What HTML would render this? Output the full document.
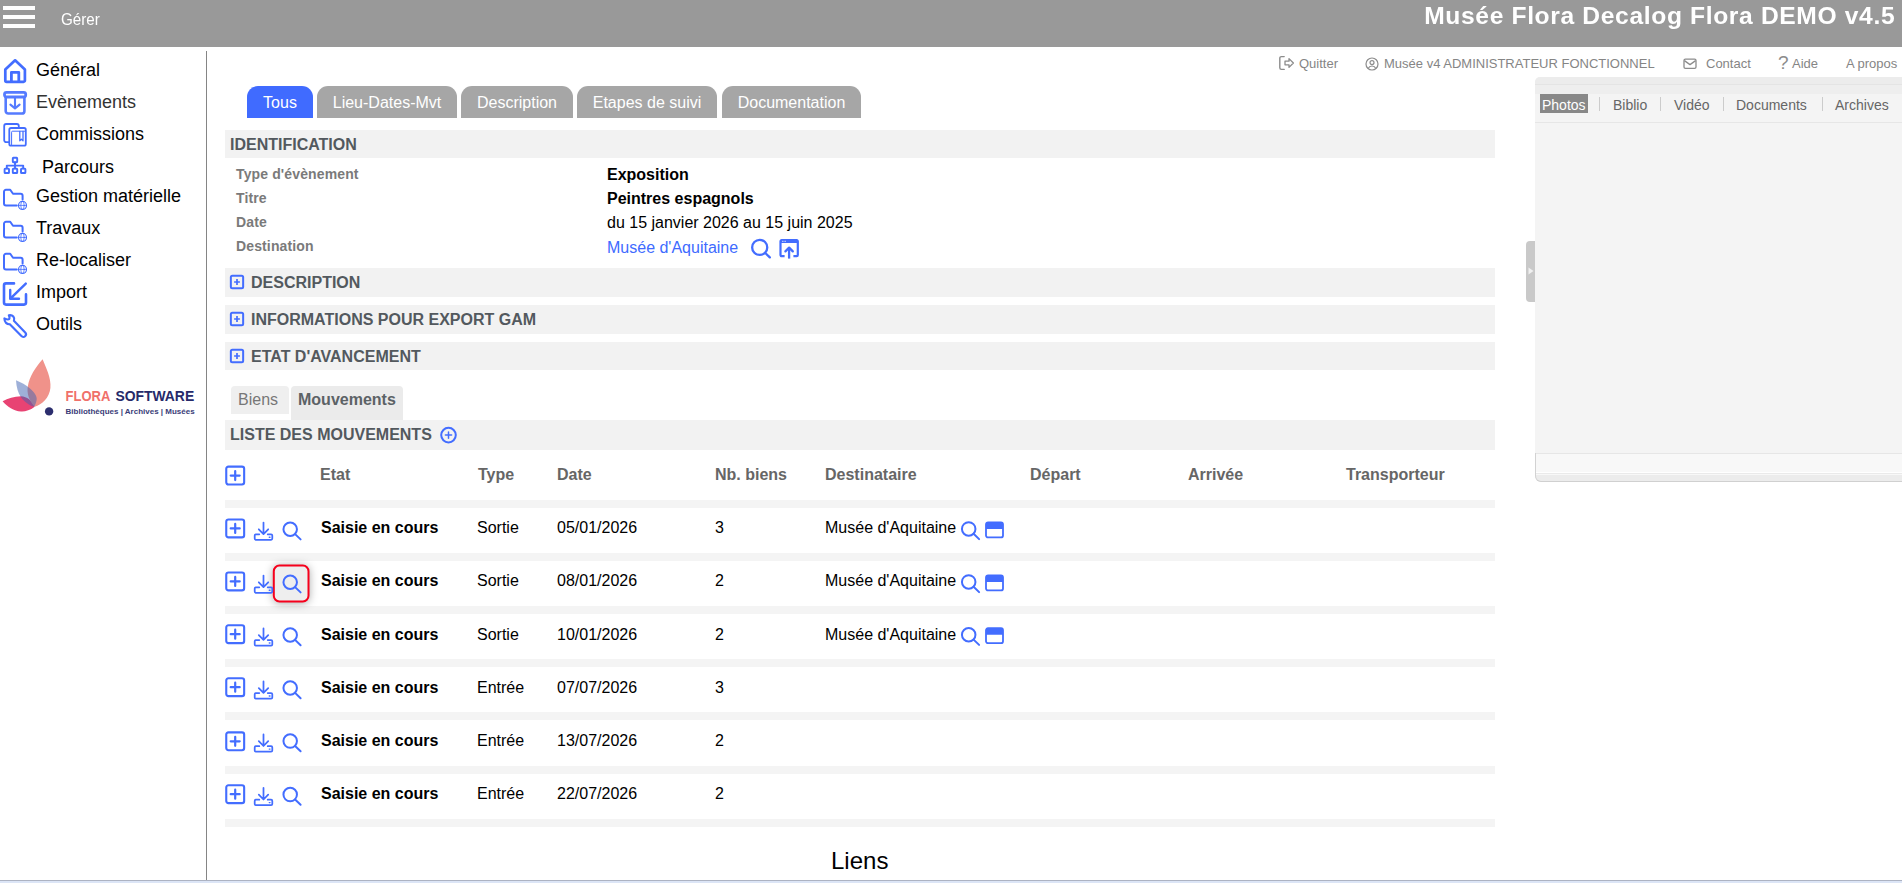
<!DOCTYPE html>
<html lang="fr">
<head>
<meta charset="utf-8">
<title>Musée Flora</title>
<style>
*{box-sizing:border-box;margin:0;padding:0}
html,body{width:1902px;height:883px;overflow:hidden;background:#fff}
body{font-family:"Liberation Sans",sans-serif;color:#000;position:relative}
.abs{position:absolute;white-space:nowrap}
svg{display:block;overflow:visible}
.ic{fill:none;stroke:#436dff;stroke-width:2;stroke-linecap:round;stroke-linejoin:round}
#hdr{left:0;top:0;width:1902px;height:47px;background:#999}
.bar3{left:3px;width:32px;height:4px;background:#fff}
.side{left:36px;font-size:18px;line-height:22px;color:#000}
.sico{left:2px;width:26px;height:26px}
.tab{top:86px;height:32px;border-radius:11px 11px 0 0;background:#a6a6a6;color:#fff;font-size:16px;line-height:34px;text-align:center}
.sec{left:225px;width:1270px;background:#f2f2f2;color:#53595e;font-weight:bold;font-size:16px}
.lbl{left:236px;letter-spacing:.13px;font-size:14px;font-weight:bold;color:#7a7a7a;line-height:16px}
.val{left:607px;font-size:16px;line-height:18px}
.th{top:466px;font-size:16px;font-weight:bold;color:#666;line-height:18px}
.sep{left:225px;width:1270px;height:8px;background:#f4f4f4}
.td{font-size:16px;line-height:18px;color:#000}
.top{top:56px;font-size:13px;line-height:15px;color:#858585}
.rt{top:97px;font-size:14px;line-height:16px;color:#666}
.rs{top:97px;width:1px;height:14px;background:#ccc}
</style>
</head>
<body>
<!-- HEADER -->
<div class="abs" id="hdr"></div>
<div class="abs bar3" style="top:6px"></div>
<div class="abs bar3" style="top:15px"></div>
<div class="abs bar3" style="top:24px"></div>
<div class="abs" id="gerer" style="left:61px;top:10px;font-size:16px;line-height:20px;color:#fff;transform:scaleX(.95);transform-origin:0 50%">Gérer</div>
<div class="abs" id="title" style="right:7px;top:2px;font-size:23px;line-height:28px;font-weight:bold;color:#fff;letter-spacing:.6px;transform:scaleX(1.07);transform-origin:100% 50%">Musée Flora Decalog Flora DEMO v4.5</div>

<!-- SIDEBAR -->
<div class="abs" style="left:206px;top:51px;width:1px;height:829px;background:#858585"></div>
<div class="abs side" style="left:36px;top:59px">Général</div>
<div class="abs side" style="left:36px;top:91px;color:#333">Evènements</div>
<div class="abs side" style="left:36px;top:123px">Commissions</div>
<div class="abs side" style="left:42px;top:156px">Parcours</div>
<div class="abs side" style="left:36px;top:185px">Gestion matérielle</div>
<div class="abs side" style="left:36px;top:217px">Travaux</div>
<div class="abs side" style="left:36px;top:249px">Re-localiser</div>
<div class="abs side" style="left:36px;top:281px">Import</div>
<div class="abs side" style="left:36px;top:313px">Outils</div>
<svg class="abs ic" style="left:0;top:50px" width="32" height="300" viewBox="0 50 32 300" stroke-width="2.5">
<!-- home -->
<path d="M5.3 69.6L15.1 60.3L24.9 69.6V80.5a1.3 1.3 0 0 1-1.3 1.3H6.6a1.3 1.3 0 0 1-1.3-1.3Z" stroke-width="2.7"/>
<path d="M11.4 81.6V72.3h7.4v9.3" stroke-width="2.8"/>
<!-- evenements -->
<g stroke="#557bff">
<rect x="4.5" y="92.3" width="21.2" height="4.7" rx="2" stroke-width="2.8"/>
<path d="M5.7 97.6V110.9a2.6 2.6 0 0 0 2.6 2.6H21.8a2.6 2.6 0 0 0 2.6-2.6V97.6" stroke-width="2.6"/>
<path d="M15 97.4V108M10.4 104.6l4.6 3.8l4.6-3.8" stroke-width="2.1"/>
</g>
<!-- commissions -->
<path d="M8.4 142.2H6.2a2 2 0 0 1-2-2V126a2 2 0 0 1 2-2h10.6a2 2 0 0 1 2 2v1.2" stroke-width="1.8"/>
<rect x="9.3" y="128" width="16.5" height="17.7" rx="1.8" stroke-width="1.8"/>
<path d="M11.6 144.6V132.2a1 1 0 0 1 1-1H24.6" stroke-width="1"/>
<path d="M19.8 131.4V140.8l1.6-1.5l1.6 1.5V131.4" stroke-width="1.3"/>
<!-- parcours -->
<g stroke-width="1.9">
<rect x="12.8" y="157.8" width="4.4" height="4.4" rx=".6"/>
<rect x="4.6" y="168.6" width="4.4" height="4.4" rx=".6"/>
<rect x="12.8" y="168.6" width="4.4" height="4.4" rx=".6"/>
<rect x="21" y="168.6" width="4.4" height="4.4" rx=".6"/>
<path d="M15 162.4V168.4M6.8 168.4V165.6H23.2V168.4"/>
</g>
<!-- folders -->
<g stroke-width="2" transform="translate(0,-0.8)">
<path d="M16.8 206.4H6a2 2 0 0 1-2-2V192.6a2 2 0 0 1 2-2h4.2l2.8 4H20.6a2 2 0 0 1 2 2v3.7"/>
<g stroke-width=".8"><circle stroke-width="1.15" cx="22.5" cy="206.2" r="4"/><ellipse cx="22.5" cy="206.2" rx="1.7" ry="4"/><path d="M18.5 206.2h8"/></g>
<path d="M16.8 238.4H6a2 2 0 0 1-2-2V224.6a2 2 0 0 1 2-2h4.2l2.8 4H20.6a2 2 0 0 1 2 2v3.7"/>
<g stroke-width=".8"><circle stroke-width="1.15" cx="22.5" cy="238.2" r="4"/><ellipse cx="22.5" cy="238.2" rx="1.7" ry="4"/><path d="M18.5 238.2h8"/></g>
<path d="M16.8 270.4H6a2 2 0 0 1-2-2V256.6a2 2 0 0 1 2-2h4.2l2.8 4H20.6a2 2 0 0 1 2 2v3.7"/>
<g stroke-width=".8"><circle stroke-width="1.15" cx="22.5" cy="270.2" r="4"/><ellipse cx="22.5" cy="270.2" rx="1.7" ry="4"/><path d="M18.5 270.2h8"/></g>
</g>
<!-- import -->
<path d="M14 283.4H6a2 2 0 0 0-2 2V302.6a2 2 0 0 0 2 2H24a2 2 0 0 0 2-2V294.4" stroke-width="2.6"/>
<path d="M25.8 283.6L10.6 298.4M10.2 290V298.8H19" stroke-width="2.4"/>
<!-- outils -->
<path d="M8.8 315.2Q11.4 321.6 4.4 318.4C4.4 322.2 7 324.6 9.8 324.2L21.4 336.1A2.6 2.6 0 0 0 25.2 332.5L13.9 320.8C15.2 317.4 12.8 314.4 8.8 315.2Z" stroke-width="2.15"/>
</svg>


<svg class="abs" style="left:0;top:350px" width="200" height="75" viewBox="0 350 200 75">
<path d="M2.6 401.2C8 398.6 14 396.6 21 396.3C27 396.6 32 400.6 34.7 406.8C30 410.4 25 411.8 21 411.5C14 411.2 7 406.6 2.6 401.2Z" fill="#e84373"/>
<path d="M42.6 359.3C46 368 51.4 378 50.4 388C49.4 398 42 404.6 34.7 406.8C28.6 400 26.6 393 27.9 386C29.4 377 35.6 367 42.6 359.3Z" fill="#f0928a"/>
<path d="M16 380.3C21 382.4 26 385 30 388.4C34.6 392.4 37.4 396.6 36.6 400C36 403 35 405.4 34.2 406.8C29.6 405.6 24.4 402 21 397.3C18 393.2 16.4 387 16 380.3Z" fill="#3d61b1" fill-opacity=".5"/>
<circle cx="49.1" cy="411.4" r="4.2" fill="#2c2e6e"/>
<text x="65.6" y="400.7" font-family="Liberation Sans, sans-serif" font-weight="bold" font-size="14.4" fill="#f0706a" textLength="44.8" lengthAdjust="spacingAndGlyphs">FLORA</text>
<text x="115.4" y="400.7" font-family="Liberation Sans, sans-serif" font-weight="bold" font-size="14.4" fill="#262a6a" textLength="78.8" lengthAdjust="spacingAndGlyphs">SOFTWARE</text>
<text x="65.6" y="414.2" font-family="Liberation Sans, sans-serif" font-weight="bold" font-size="7" fill="#3a3c78" textLength="129" lengthAdjust="spacingAndGlyphs">Bibliothèques | Archives | Musées</text>
</svg>
<!-- TOP LINKS -->
<svg class="abs" style="left:1278px;top:55px" width="17" height="16" viewBox="-1 0 17 16" fill="none" stroke="#8c8c8c" stroke-width="1.4" stroke-linecap="round" stroke-linejoin="round"><path d="M5.2 1.6H2.4A1.6 1.6 0 0 0 .8 3.2v9.6a1.6 1.6 0 0 0 1.6 1.6h2.8"/><path d="M6 6.2h4V3.6l4.4 4.4L10 12.4V9.8H6z" stroke-width="1.3"/></svg>
<div class="abs top" style="left:1299px">Quitter</div>
<svg class="abs" style="left:1365px;top:57px" width="14" height="14" viewBox="0 0 14 14" fill="none" stroke="#8c8c8c" stroke-width="1.2"><circle cx="7" cy="7" r="6"/><circle cx="7" cy="5.6" r="2"/><path d="M3.2 11.4c.8-1.8 2.2-2.4 3.8-2.4s3 .6 3.8 2.4"/></svg>
<div class="abs top" style="left:1384px">Musée v4 ADMINISTRATEUR FONCTIONNEL</div>
<svg class="abs" style="left:1683px;top:58px" width="14" height="12" viewBox="0 0 14 12" fill="none" stroke="#8c8c8c" stroke-width="1.3" stroke-linejoin="round"><rect x="1" y="1.2" width="12" height="9.2" rx="1.4"/><path d="M1.4 2.6L7 6.6l5.6-4"/></svg>
<div class="abs top" style="left:1706px">Contact</div>
<div class="abs top" style="left:1778px;top:52px;font-size:19px;line-height:22px;color:#8c8c8c">?</div>
<div class="abs top" style="left:1792px">Aide</div>
<div class="abs top" style="left:1846px">A propos</div>


<!-- TABS -->
<div class="abs tab" style="left:247px;width:66px;background:#406bff">Tous</div>
<div class="abs tab" style="left:317px;width:140px">Lieu-Dates-Mvt</div>
<div class="abs tab" style="left:461px;width:112px">Description</div>
<div class="abs tab" style="left:577px;width:140px">Etapes de suivi</div>
<div class="abs tab" style="left:722px;width:139px">Documentation</div>


<!-- MAIN -->
<div class="abs sec" style="top:130px;height:28px;line-height:30px;padding-left:5px">IDENTIFICATION</div>
<div class="abs lbl" style="top:166px">Type d'évènement</div>
<div class="abs lbl" style="top:190px">Titre</div>
<div class="abs lbl" style="top:214px">Date</div>
<div class="abs lbl" style="top:238px">Destination</div>
<div class="abs val" style="top:166px;font-weight:bold">Exposition</div>
<div class="abs val" style="top:190px;font-weight:bold">Peintres espagnols</div>
<div class="abs val" style="top:214px">du 15 janvier 2026 au 15 juin 2025</div>
<div class="abs val" style="top:239px;color:#406bff">Musée d'Aquitaine</div>
<svg class="abs ic" style="left:740px;top:230px" width="70" height="40" viewBox="740 230 70 40">
<g stroke-width="2.3"><circle cx="759.7" cy="247.4" r="7.55"/><path d="M765.3 253l4.5 4.4"/></g>
<g stroke-width="2.2" stroke-linecap="butt" stroke-linejoin="round">
<path d="M784.6 256.2H781.6a1.1 1.1 0 0 1-1.1-1.1V241.2a1.1 1.1 0 0 1 1.1-1.1H796.7a1.1 1.1 0 0 1 1.1 1.1V255.1a1.1 1.1 0 0 1-1.1 1.1H793.4"/>
<path d="M780.5 240.1H797.8V243H780.5z" fill="#436dff" stroke="none"/>
<path d="M789.1 258.6V248" stroke-width="2.3"/><path d="M785.4 251.4l3.7-3.8l3.7 3.8" stroke-width="2.3" stroke-linecap="round"/>
<path d="M782.2 241.3h3.6" stroke="#fff" stroke-width=".9" stroke-dasharray=".9 .5"/>
</g></svg>
<div class="abs sec" style="top:268px;height:29px;line-height:29px;padding-left:26px">DESCRIPTION</div>
<svg class="abs ic" style="left:230px;top:275px" width="14" height="14" viewBox="0 0 14 14" stroke-width="1.35"><rect x=".85" y=".85" width="12.3" height="12.3" rx="1.5"/><path d="M7 4.1v5.8M4.1 7h5.8" stroke-width="1.7" stroke-linecap="butt"/></svg>
<div class="abs sec" style="top:305px;height:29px;line-height:29px;padding-left:26px">INFORMATIONS POUR EXPORT GAM</div>
<svg class="abs ic" style="left:230px;top:312px" width="14" height="14" viewBox="0 0 14 14" stroke-width="1.35"><rect x=".85" y=".85" width="12.3" height="12.3" rx="1.5"/><path d="M7 4.1v5.8M4.1 7h5.8" stroke-width="1.7" stroke-linecap="butt"/></svg>
<div class="abs sec" style="top:342px;height:28px;line-height:29px;padding-left:26px">ETAT D'AVANCEMENT</div>
<svg class="abs ic" style="left:230px;top:349px" width="14" height="14" viewBox="0 0 14 14" stroke-width="1.35"><rect x=".85" y=".85" width="12.3" height="12.3" rx="1.5"/><path d="M7 4.1v5.8M4.1 7h5.8" stroke-width="1.7" stroke-linecap="butt"/></svg>
<div class="abs" style="left:231px;top:386px;width:58px;height:28px;background:#efefef;border-radius:4px 4px 0 0;color:#777;font-size:16px;line-height:27px;padding-left:7px">Biens</div>
<div class="abs" style="left:291px;top:386px;width:112px;height:34px;background:#ebebeb;border-radius:4px 4px 0 0;color:#5c6266;font-weight:bold;font-size:16px;line-height:27px;padding-left:7px">Mouvements</div>
<div class="abs sec" style="top:420px;height:30px;line-height:29px;padding-left:5px">LISTE DES MOUVEMENTS</div>
<svg class="abs ic" style="left:440px;top:426px" width="18" height="18" viewBox="0 0 18 18" stroke-width="1.3"><circle cx="8.5" cy="9.1" r="7.3"/><path d="M8.5 6v6.2M5.4 9.1h6.2" stroke-width="1.5"/></svg>


<!-- TABLE -->
<div class="abs th" style="left:320px">Etat</div>
<div class="abs th" style="left:478px">Type</div>
<div class="abs th" style="left:557px">Date</div>
<div class="abs th" style="left:715px">Nb. biens</div>
<div class="abs th" style="left:825px">Destinataire</div>
<div class="abs th" style="left:1030px">Départ</div>
<div class="abs th" style="left:1188px">Arrivée</div>
<div class="abs th" style="left:1346px">Transporteur</div>
<div class="abs sep" style="top:500px"></div>
<div class="abs sep" style="top:553px"></div>
<div class="abs sep" style="top:606px"></div>
<div class="abs sep" style="top:659px"></div>
<div class="abs sep" style="top:712px"></div>
<div class="abs sep" style="top:766px"></div>
<div class="abs sep" style="top:819px"></div>
<svg class="abs" style="left:262px;top:554px;filter:drop-shadow(0 1px 4px rgba(0,0,0,.33))" width="60" height="60" viewBox="262 554 60 60"><rect x="273.8" y="565.6" width="34.7" height="35.8" rx="5.6" fill="#eeeeee" stroke="#f6001c" stroke-width="2"/></svg>
<div class="abs td" style="left:321px;top:519px;font-weight:bold">Saisie en cours</div><div class="abs td" style="left:477px;top:519px">Sortie</div><div class="abs td" style="left:557px;top:519px">05/01/2026</div><div class="abs td" style="left:715px;top:519px">3</div><div class="abs td" style="left:825px;top:519px">Musée d'Aquitaine</div>
<div class="abs td" style="left:321px;top:572px;font-weight:bold">Saisie en cours</div><div class="abs td" style="left:477px;top:572px">Sortie</div><div class="abs td" style="left:557px;top:572px">08/01/2026</div><div class="abs td" style="left:715px;top:572px">2</div><div class="abs td" style="left:825px;top:572px">Musée d'Aquitaine</div>
<div class="abs td" style="left:321px;top:626px;font-weight:bold">Saisie en cours</div><div class="abs td" style="left:477px;top:626px">Sortie</div><div class="abs td" style="left:557px;top:626px">10/01/2026</div><div class="abs td" style="left:715px;top:626px">2</div><div class="abs td" style="left:825px;top:626px">Musée d'Aquitaine</div>
<div class="abs td" style="left:321px;top:679px;font-weight:bold">Saisie en cours</div><div class="abs td" style="left:477px;top:679px">Entrée</div><div class="abs td" style="left:557px;top:679px">07/07/2026</div><div class="abs td" style="left:715px;top:679px">3</div>
<div class="abs td" style="left:321px;top:732px;font-weight:bold">Saisie en cours</div><div class="abs td" style="left:477px;top:732px">Entrée</div><div class="abs td" style="left:557px;top:732px">13/07/2026</div><div class="abs td" style="left:715px;top:732px">2</div>
<div class="abs td" style="left:321px;top:785px;font-weight:bold">Saisie en cours</div><div class="abs td" style="left:477px;top:785px">Entrée</div><div class="abs td" style="left:557px;top:785px">22/07/2026</div><div class="abs td" style="left:715px;top:785px">2</div>
<svg class="abs ic" style="left:0;top:0" width="1902" height="883" viewBox="0 0 1902 883">
<g transform="translate(225.20,465.60)" stroke-width="2.1"><rect x="1.05" y="1.05" width="17.9" height="17.9" rx="2.2"/><path d="M10 5.5v9M5.5 10h9" stroke-width="2.2"/></g>
<g transform="translate(225.20,518.40)" stroke-width="2.1"><rect x="1.05" y="1.05" width="17.9" height="17.9" rx="2.2"/><path d="M10 5.5v9M5.5 10h9" stroke-width="2.2"/></g><g transform="translate(253.90,521.70)" stroke-width="1.75"><path d="M9.6 .9V12.2M4.9 7.6L9.6 12.4l4.7-4.8"/><path d="M5.4 12.6H2a1.2 1.2 0 0 0-1.2 1.2v3.1A1.2 1.2 0 0 0 2 18.1H17.2a1.2 1.2 0 0 0 1.2-1.2v-3.1a1.2 1.2 0 0 0-1.2-1.2H13.8"/><path d="M15.4 15.5h.7" stroke-width="1.4"/></g><g transform="translate(281.80,520.80)" stroke-width="2.0"><circle cx="8.4" cy="8.4" r="6.75"/><path d="M13.3 13.3l5.5 5.3"/></g><g transform="translate(960.30,520.50)" stroke-width="2.0"><circle cx="8.4" cy="8.4" r="6.75"/><path d="M13.3 13.3l5.5 5.3"/></g><g transform="translate(985.00,521.40)"><rect x="1" y="1" width="17" height="15" rx="2" stroke-width="1.8"/><path d="M1 3a2 2 0 0 1 2-2h13a2 2 0 0 1 2 2v4.5H1z" fill="#436dff" stroke="none"/></g>
<g transform="translate(225.20,571.40)" stroke-width="2.1"><rect x="1.05" y="1.05" width="17.9" height="17.9" rx="2.2"/><path d="M10 5.5v9M5.5 10h9" stroke-width="2.2"/></g><g transform="translate(253.90,574.70)" stroke-width="1.75"><path d="M9.6 .9V12.2M4.9 7.6L9.6 12.4l4.7-4.8"/><path d="M5.4 12.6H2a1.2 1.2 0 0 0-1.2 1.2v3.1A1.2 1.2 0 0 0 2 18.1H17.2a1.2 1.2 0 0 0 1.2-1.2v-3.1a1.2 1.2 0 0 0-1.2-1.2H13.8"/><path d="M15.4 15.5h.7" stroke-width="1.4"/></g><g transform="translate(281.80,573.80)" stroke-width="2.0"><circle cx="8.4" cy="8.4" r="6.75"/><path d="M13.3 13.3l5.5 5.3"/></g><g transform="translate(960.30,573.50)" stroke-width="2.0"><circle cx="8.4" cy="8.4" r="6.75"/><path d="M13.3 13.3l5.5 5.3"/></g><g transform="translate(985.00,574.40)"><rect x="1" y="1" width="17" height="15" rx="2" stroke-width="1.8"/><path d="M1 3a2 2 0 0 1 2-2h13a2 2 0 0 1 2 2v4.5H1z" fill="#436dff" stroke="none"/></g>
<g transform="translate(225.20,624.20)" stroke-width="2.1"><rect x="1.05" y="1.05" width="17.9" height="17.9" rx="2.2"/><path d="M10 5.5v9M5.5 10h9" stroke-width="2.2"/></g><g transform="translate(253.90,627.50)" stroke-width="1.75"><path d="M9.6 .9V12.2M4.9 7.6L9.6 12.4l4.7-4.8"/><path d="M5.4 12.6H2a1.2 1.2 0 0 0-1.2 1.2v3.1A1.2 1.2 0 0 0 2 18.1H17.2a1.2 1.2 0 0 0 1.2-1.2v-3.1a1.2 1.2 0 0 0-1.2-1.2H13.8"/><path d="M15.4 15.5h.7" stroke-width="1.4"/></g><g transform="translate(281.80,626.60)" stroke-width="2.0"><circle cx="8.4" cy="8.4" r="6.75"/><path d="M13.3 13.3l5.5 5.3"/></g><g transform="translate(960.30,626.30)" stroke-width="2.0"><circle cx="8.4" cy="8.4" r="6.75"/><path d="M13.3 13.3l5.5 5.3"/></g><g transform="translate(985.00,627.20)"><rect x="1" y="1" width="17" height="15" rx="2" stroke-width="1.8"/><path d="M1 3a2 2 0 0 1 2-2h13a2 2 0 0 1 2 2v4.5H1z" fill="#436dff" stroke="none"/></g>
<g transform="translate(225.20,677.20)" stroke-width="2.1"><rect x="1.05" y="1.05" width="17.9" height="17.9" rx="2.2"/><path d="M10 5.5v9M5.5 10h9" stroke-width="2.2"/></g><g transform="translate(253.90,680.50)" stroke-width="1.75"><path d="M9.6 .9V12.2M4.9 7.6L9.6 12.4l4.7-4.8"/><path d="M5.4 12.6H2a1.2 1.2 0 0 0-1.2 1.2v3.1A1.2 1.2 0 0 0 2 18.1H17.2a1.2 1.2 0 0 0 1.2-1.2v-3.1a1.2 1.2 0 0 0-1.2-1.2H13.8"/><path d="M15.4 15.5h.7" stroke-width="1.4"/></g><g transform="translate(281.80,679.60)" stroke-width="2.0"><circle cx="8.4" cy="8.4" r="6.75"/><path d="M13.3 13.3l5.5 5.3"/></g>
<g transform="translate(225.20,731.30)" stroke-width="2.1"><rect x="1.05" y="1.05" width="17.9" height="17.9" rx="2.2"/><path d="M10 5.5v9M5.5 10h9" stroke-width="2.2"/></g><g transform="translate(253.90,733.60)" stroke-width="1.75"><path d="M9.6 .9V12.2M4.9 7.6L9.6 12.4l4.7-4.8"/><path d="M5.4 12.6H2a1.2 1.2 0 0 0-1.2 1.2v3.1A1.2 1.2 0 0 0 2 18.1H17.2a1.2 1.2 0 0 0 1.2-1.2v-3.1a1.2 1.2 0 0 0-1.2-1.2H13.8"/><path d="M15.4 15.5h.7" stroke-width="1.4"/></g><g transform="translate(281.80,732.70)" stroke-width="2.0"><circle cx="8.4" cy="8.4" r="6.75"/><path d="M13.3 13.3l5.5 5.3"/></g>
<g transform="translate(225.20,784.20)" stroke-width="2.1"><rect x="1.05" y="1.05" width="17.9" height="17.9" rx="2.2"/><path d="M10 5.5v9M5.5 10h9" stroke-width="2.2"/></g><g transform="translate(253.90,787.10)" stroke-width="1.75"><path d="M9.6 .9V12.2M4.9 7.6L9.6 12.4l4.7-4.8"/><path d="M5.4 12.6H2a1.2 1.2 0 0 0-1.2 1.2v3.1A1.2 1.2 0 0 0 2 18.1H17.2a1.2 1.2 0 0 0 1.2-1.2v-3.1a1.2 1.2 0 0 0-1.2-1.2H13.8"/><path d="M15.4 15.5h.7" stroke-width="1.4"/></g><g transform="translate(281.80,786.20)" stroke-width="2.0"><circle cx="8.4" cy="8.4" r="6.75"/><path d="M13.3 13.3l5.5 5.3"/></g>
</svg>
<div class="abs" style="left:831px;top:847px;font-size:24px;line-height:28px">Liens</div>

<!-- RIGHT PANEL -->
<div class="abs" style="left:1535px;top:77px;width:367px;height:405px;background:#f4f4f4;border-radius:5px 0 0 6px"></div>
<div class="abs" style="left:1535px;top:77px;width:367px;height:8px;background:#ececec;border-radius:5px 0 0 0;border-bottom:1px solid #e4e4e4"></div>
<div class="abs" style="left:1535px;top:85px;width:367px;height:9px;background:#eeeeee"></div>
<div class="abs" style="left:1535px;top:122px;width:367px;height:1px;background:#e6e6e6"></div>
<div class="abs" style="left:1535px;top:453px;width:367px;height:29px;background:#ececec;border-radius:0 0 0 6px;border-left:1px solid #d2d2d2;border-bottom:1px solid #d0d0d0;overflow:hidden">
<div style="height:1px;background:#e6e6e6"></div><div style="height:18px;background:#f8f8f8"></div><div style="height:1px;background:#fff"></div><div style="height:1px;background:#eaeaea"></div><div style="height:1px;background:#f8f8f8"></div></div>
<div class="abs" style="left:1540px;top:94px;width:48px;height:19px;background:#888"></div>
<div class="abs rt" style="left:1542px;color:#fff">Photos</div>
<div class="abs rs" style="left:1599px"></div>
<div class="abs rt" style="left:1613px">Biblio</div>
<div class="abs rs" style="left:1660px"></div>
<div class="abs rt" style="left:1674px">Vidéo</div>
<div class="abs rs" style="left:1723px"></div>
<div class="abs rt" style="left:1736px">Documents</div>
<div class="abs rs" style="left:1822px"></div>
<div class="abs rt" style="left:1835px">Archives</div>
<div class="abs" style="left:1526px;top:241px;width:9px;height:61px;background:#c9c9c9;border-radius:4px 0 0 4px"></div>
<svg class="abs" style="left:1528px;top:267px" width="6" height="8" viewBox="0 0 6 8"><path d="M.5 .5L5.5 4L.5 7.5z" fill="#f0f0f0"/></svg>

<div class="abs" style="left:0;top:880px;width:1902px;height:1px;background:#adb3c2"></div>
<div class="abs" style="left:0;top:881px;width:1902px;height:2px;background:#dce5f6"></div>
</body>
</html>
